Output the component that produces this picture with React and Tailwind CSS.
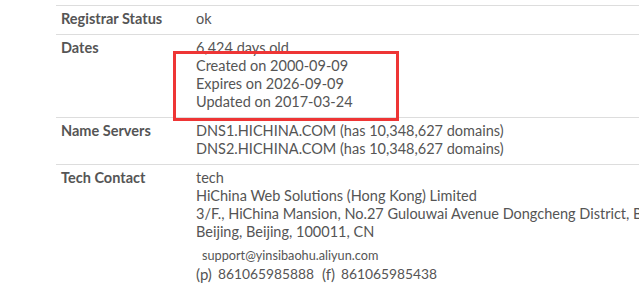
const rows = [
  { label: "Registrar Status", lines: ["ok"] },
  {
    label: "Dates",
    lines: [
      "6,424 days old",
      "Created on 2000-09-09",
      "Expires on 2026-09-09",
      "Updated on 2017-03-24",
    ],
  },
  {
    label: "Name Servers",
    lines: [
      "DNS1.HICHINA.COM (has 10,348,627 domains)",
      "DNS2.HICHINA.COM (has 10,348,627 domains)",
    ],
  },
];

function Row({ label, children }) {
  return (
    <div className="flex border-t border-[#dddddd] pt-[4px] pb-[6px]">
      <div className="w-[140px] shrink-0 pl-[5px] font-bold text-[#555555]">{label}</div>
      <div className="whitespace-nowrap">{children}</div>
    </div>
  );
}

export default function App() {
  return (
    <div className="w-[639px] h-[287px] overflow-hidden bg-white font-['Lato','Liberation_Sans',sans-serif] text-[14.5px] leading-[18px] text-[#555555]">
      <div className="relative ml-[56px] mt-[5px] w-[640px]">
        {rows.map((r) => (
          <Row key={r.label} label={r.label}>
            {r.lines.map((l) => (
              <div key={l}>{l}</div>
            ))}
          </Row>
        ))}
        <Row label="Tech Contact">
          <div>tech</div>
          <div>HiChina Web Solutions (Hong Kong) Limited</div>
          <div>3/F., HiChina Mansion, No.27 Gulouwai Avenue Dongcheng District, Beijing</div>
          <div>Beijing, Beijing, 100011, CN</div>
          <div className="mt-[5px] pl-[6px] text-[12.7px]">support@yinsibaohu.aliyun.com</div>
          <div className="flex items-center leading-[20px]">
            <span className="text-[15px] mr-[6px]">(p)</span>
            <span className="text-[13.8px] mr-[8px]">861065985888</span>
            <span className="text-[15px] mr-[6px]">(f)</span>
            <span className="text-[13.8px]">861065985438</span>
          </div>
        </Row>

        {/* highlight around the date lines */}
        <div className="absolute left-[117px] top-[46px] w-[226px] h-[70px] border-[3px] border-[#ee3535]" />
      </div>
    </div>
  );
}
